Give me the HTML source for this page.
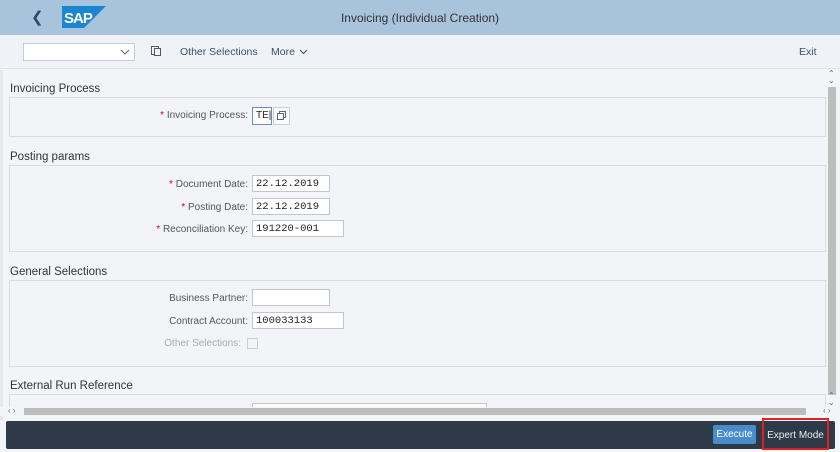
<html><head><style>
body{margin:0;width:840px;height:451px;overflow:hidden;background:#f2f4f7;font-family:"Liberation Sans",sans-serif;position:relative}
div,span{position:absolute;box-sizing:border-box}
.lbl{font-size:10px;color:#555;text-align:right;white-space:nowrap}
.st{color:#d0021b}
.inp{background:#fff;border:1px solid #bfc6ce;height:17px;font-family:"Liberation Mono",monospace;font-size:10.5px;color:#222;padding:2px 0 0 3px}
.title{font-size:11.5px;color:#333}
.box{border:1px solid #d8dde3;left:9px;width:817px}
</style></head><body>
<div style="left:0;top:0;width:840px;height:35px;background:#a8c3dc"></div>
<div style="left:31px;top:8px;font-size:15px;color:#2d4a6a">&#10094;</div>
<svg style="position:absolute;left:62px;top:6px" width="44" height="22"><polygon points="0,0 44,0 22,22 0,22" fill="#1a86d0"/><text x="2" y="17" font-family="Liberation Sans" font-weight="bold" font-size="15" fill="#fff" letter-spacing="-1">SAP</text></svg>
<div style="left:0;width:840px;top:11px;text-align:center;font-size:12px;color:#333">Invoicing (Individual Creation)</div>
<div style="left:0;top:35px;width:840px;height:34px;background:#eff3f7;border-bottom:1px solid #dde2e8"></div>
<div style="left:23px;top:43px;width:112px;height:18px;background:#fff;border:1px solid #c5ccd4"></div>
<svg style="position:absolute;left:120px;top:49px" width="10" height="6"><polyline points="1,1 5,5 9,1" fill="none" stroke="#667" stroke-width="1"/></svg>
<div style="left:151px;top:46px;width:8px;height:9px;border:1px solid #556;"></div>
<div style="left:154px;top:48px;width:7px;height:8px;border:1px solid #556;background:#eff3f7"></div>
<div style="left:180px;top:46px;font-size:10.5px;color:#3a5068">Other Selections</div>
<div style="left:271px;top:46px;font-size:10.5px;color:#3a5068">More</div>
<svg style="position:absolute;left:299px;top:49px" width="9" height="6"><polyline points="1,1 4.5,4.5 8,1" fill="none" stroke="#3a5068" stroke-width="1"/></svg>
<div style="left:799px;top:46px;font-size:10.5px;color:#3a5068">Exit</div>
<div style="left:0;top:70px;width:3px;height:350px;background:#e6e8eb"></div>

<div class="title" style="left:10px;top:83px">Invoicing Process</div>
<div class="box" style="top:97px;height:40px"></div>
<div class="lbl" style="right:592px;top:110px"><span class="st" style="position:static">*</span> Invoicing Process:</div>
<div class="inp" style="left:252px;top:107px;width:20px;height:18px;border:1px solid #6a8fb5;font-family:'Liberation Sans';font-size:10px">TE|</div>
<div style="left:273px;top:107px;width:17px;height:18px;border:1px solid #ccd;background:#fafbfc"></div>
<div style="left:279px;top:111px;width:7px;height:7px;border:1px solid #667"></div>
<div style="left:277px;top:113px;width:7px;height:7px;border:1px solid #667;background:#fafbfc"></div>

<div class="title" style="left:10px;top:151px">Posting params</div>
<div class="box" style="top:165px;height:87px"></div>
<div class="lbl" style="right:592px;top:179px"><span class="st" style="position:static">*</span> Document Date:</div>
<div class="inp" style="left:252px;top:175px;width:78px">22.12.2019</div>
<div class="lbl" style="right:592px;top:202px"><span class="st" style="position:static">*</span> Posting Date:</div>
<div class="inp" style="left:252px;top:198px;width:78px">22.12.2019</div>
<div class="lbl" style="right:592px;top:224px"><span class="st" style="position:static">*</span> Reconciliation Key:</div>
<div class="inp" style="left:252px;top:220px;width:92px">191220-001</div>

<div class="title" style="left:10px;top:266px">General Selections</div>
<div class="box" style="top:280px;height:87px"></div>
<div class="lbl" style="right:592px;top:293px">Business Partner:</div>
<div class="inp" style="left:252px;top:289px;width:78px"></div>
<div class="lbl" style="right:592px;top:316px">Contract Account:</div>
<div class="inp" style="left:252px;top:312px;width:92px">100033133</div>
<div class="lbl" style="right:599px;top:338px;color:#aaa">Other Selections:</div>
<div style="left:247px;top:338px;width:11px;height:11px;border:1px solid #ccd"></div>

<div class="title" style="left:10px;top:380px">External Run Reference</div>
<div class="box" style="top:394px;height:20px;border-bottom:none"></div>
<div style="left:252px;top:403px;width:235px;height:6px;background:#fff;border:1px solid #bfc6ce;border-bottom:none"></div>
<div style="left:0;top:407px;width:840px;height:9px;background:#f2f4f7"></div>
<div style="left:8px;top:406px;font-size:8px;color:#666">&lsaquo; &rsaquo;</div>
<div style="left:24px;top:408px;width:782px;height:7px;background:#bdbdbd"></div>
<div style="left:823px;top:406px;font-size:8px;color:#666">&lsaquo; &rsaquo;</div>
<div style="left:828px;top:70px;font-size:8px;color:#666;line-height:7px">&#8963;<br>&#8964;</div>
<div style="left:828px;top:87px;width:8px;height:308px;background:#bdbdbd"></div>
<div style="left:828px;top:392px;font-size:8px;color:#666;line-height:7px">&#8963;<br>&#8964;</div>

<div style="left:6px;top:421px;width:829px;height:28px;background:#2e3a47;border-radius:2px"></div>
<div style="left:713px;top:425px;width:43px;height:19px;background:#4a8ccb;color:#fff;font-size:10px;text-align:center;line-height:19px;border-radius:2px">Execute</div>
<div style="left:762px;top:418px;width:67px;height:32px;border:2px solid #d22;color:#e8ecf0;font-size:10px;text-align:center;line-height:32px">Expert Mode</div>
</body></html>
